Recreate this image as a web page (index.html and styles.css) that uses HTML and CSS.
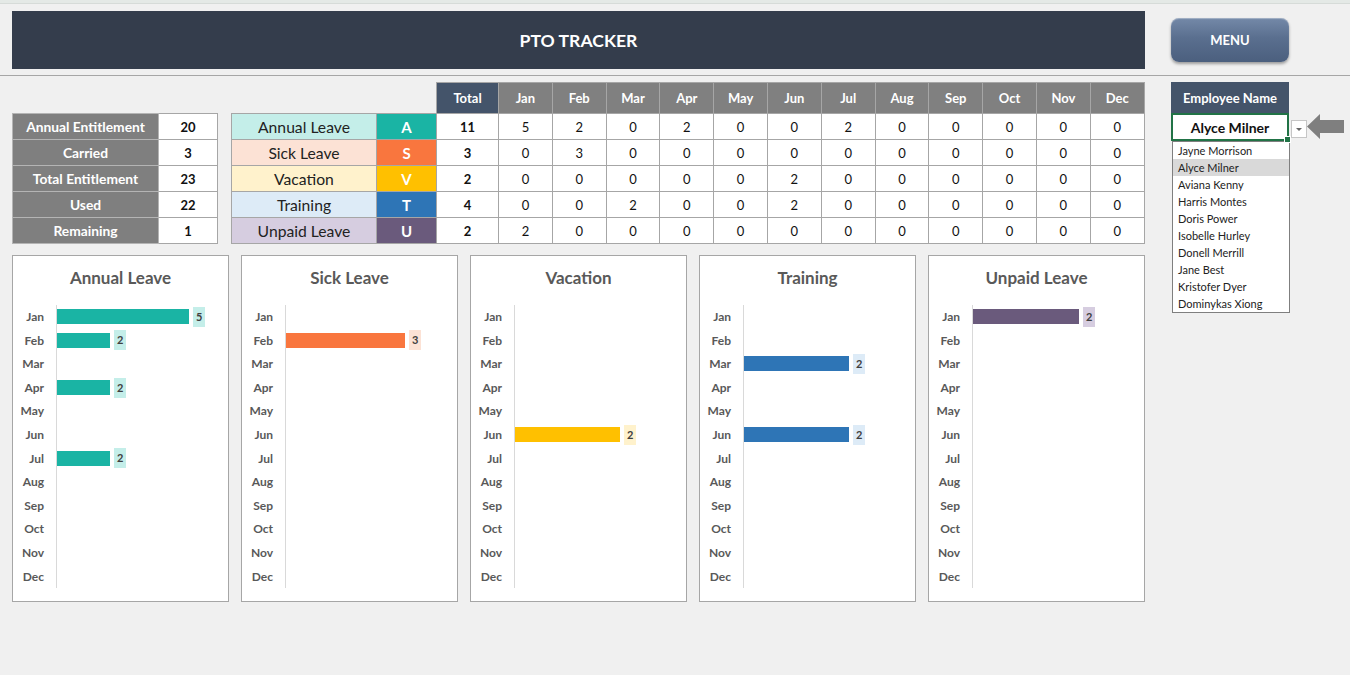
FILE: index.html
```html
<!DOCTYPE html>
<html lang="en">
<head>
  <meta charset="UTF-8">
  <meta name="viewport" content="width=device-width, initial-scale=1.0">
  <title>PTO Tracker</title>
  <link rel="stylesheet" href="styles.css">
</head>
<body>
  <div class="ribbon"></div>

  <div class="topbar">
    <div class="title-bar">PTO TRACKER</div>
    <div class="menu-btn">MENU</div>
  </div>
  <div class="divider"></div>

  <div class="content">
    <div class="left">
      <div class="tables">
        <table class="summary">
          <tr><th>Annual Entitlement</th><td>20</td></tr>
          <tr><th>Carried</th><td>3</td></tr>
          <tr><th>Total Entitlement</th><td>23</td></tr>
          <tr><th>Used</th><td>22</td></tr>
          <tr><th>Remaining</th><td>1</td></tr>
        </table>

        <table class="leave">
          <colgroup>
            <col class="c-type"><col class="c-code"><col class="c-total">
            <col span="12" class="c-month">
          </colgroup>
          <tr class="head">
            <th class="blank"></th><th class="blank"></th>
            <th class="total-h">Total</th>
            <th>Jan</th><th>Feb</th><th>Mar</th><th>Apr</th><th>May</th><th>Jun</th>
            <th>Jul</th><th>Aug</th><th>Sep</th><th>Oct</th><th>Nov</th><th>Dec</th>
          </tr>
          <tr>
            <td class="type annual-l">Annual Leave</td><td class="code annual">A</td><td class="tot">11</td>
            <td>5</td><td>2</td><td>0</td><td>2</td><td>0</td><td>0</td><td>2</td><td>0</td><td>0</td><td>0</td><td>0</td><td>0</td>
          </tr>
          <tr>
            <td class="type sick-l">Sick Leave</td><td class="code sick">S</td><td class="tot">3</td>
            <td>0</td><td>3</td><td>0</td><td>0</td><td>0</td><td>0</td><td>0</td><td>0</td><td>0</td><td>0</td><td>0</td><td>0</td>
          </tr>
          <tr>
            <td class="type vac-l">Vacation</td><td class="code vac">V</td><td class="tot">2</td>
            <td>0</td><td>0</td><td>0</td><td>0</td><td>0</td><td>2</td><td>0</td><td>0</td><td>0</td><td>0</td><td>0</td><td>0</td>
          </tr>
          <tr>
            <td class="type train-l">Training</td><td class="code train">T</td><td class="tot">4</td>
            <td>0</td><td>0</td><td>2</td><td>0</td><td>0</td><td>2</td><td>0</td><td>0</td><td>0</td><td>0</td><td>0</td><td>0</td>
          </tr>
          <tr>
            <td class="type unpaid-l">Unpaid Leave</td><td class="code unpaid">U</td><td class="tot">2</td>
            <td>2</td><td>0</td><td>0</td><td>0</td><td>0</td><td>0</td><td>0</td><td>0</td><td>0</td><td>0</td><td>0</td><td>0</td>
          </tr>
        </table>
      </div>

      <div class="charts">
        <div class="chart">
          <div class="chart-title">Annual Leave</div>
          <div class="plot">
            <div class="row"><span class="m">Jan</span><div class="track"><div class="bar annual" style="width:132px"></div><span class="val annual-l">5</span></div></div>
            <div class="row"><span class="m">Feb</span><div class="track"><div class="bar annual" style="width:53px"></div><span class="val annual-l">2</span></div></div>
            <div class="row"><span class="m">Mar</span><div class="track"></div></div>
            <div class="row"><span class="m">Apr</span><div class="track"><div class="bar annual" style="width:53px"></div><span class="val annual-l">2</span></div></div>
            <div class="row"><span class="m">May</span><div class="track"></div></div>
            <div class="row"><span class="m">Jun</span><div class="track"></div></div>
            <div class="row"><span class="m">Jul</span><div class="track"><div class="bar annual" style="width:53px"></div><span class="val annual-l">2</span></div></div>
            <div class="row"><span class="m">Aug</span><div class="track"></div></div>
            <div class="row"><span class="m">Sep</span><div class="track"></div></div>
            <div class="row"><span class="m">Oct</span><div class="track"></div></div>
            <div class="row"><span class="m">Nov</span><div class="track"></div></div>
            <div class="row"><span class="m">Dec</span><div class="track"></div></div>
          </div>
        </div>

        <div class="chart">
          <div class="chart-title">Sick Leave</div>
          <div class="plot">
            <div class="row"><span class="m">Jan</span><div class="track"></div></div>
            <div class="row"><span class="m">Feb</span><div class="track"><div class="bar sick" style="width:119px"></div><span class="val sick-l">3</span></div></div>
            <div class="row"><span class="m">Mar</span><div class="track"></div></div>
            <div class="row"><span class="m">Apr</span><div class="track"></div></div>
            <div class="row"><span class="m">May</span><div class="track"></div></div>
            <div class="row"><span class="m">Jun</span><div class="track"></div></div>
            <div class="row"><span class="m">Jul</span><div class="track"></div></div>
            <div class="row"><span class="m">Aug</span><div class="track"></div></div>
            <div class="row"><span class="m">Sep</span><div class="track"></div></div>
            <div class="row"><span class="m">Oct</span><div class="track"></div></div>
            <div class="row"><span class="m">Nov</span><div class="track"></div></div>
            <div class="row"><span class="m">Dec</span><div class="track"></div></div>
          </div>
        </div>

        <div class="chart">
          <div class="chart-title">Vacation</div>
          <div class="plot">
            <div class="row"><span class="m">Jan</span><div class="track"></div></div>
            <div class="row"><span class="m">Feb</span><div class="track"></div></div>
            <div class="row"><span class="m">Mar</span><div class="track"></div></div>
            <div class="row"><span class="m">Apr</span><div class="track"></div></div>
            <div class="row"><span class="m">May</span><div class="track"></div></div>
            <div class="row"><span class="m">Jun</span><div class="track"><div class="bar vac" style="width:105px"></div><span class="val vac-l">2</span></div></div>
            <div class="row"><span class="m">Jul</span><div class="track"></div></div>
            <div class="row"><span class="m">Aug</span><div class="track"></div></div>
            <div class="row"><span class="m">Sep</span><div class="track"></div></div>
            <div class="row"><span class="m">Oct</span><div class="track"></div></div>
            <div class="row"><span class="m">Nov</span><div class="track"></div></div>
            <div class="row"><span class="m">Dec</span><div class="track"></div></div>
          </div>
        </div>

        <div class="chart">
          <div class="chart-title">Training</div>
          <div class="plot">
            <div class="row"><span class="m">Jan</span><div class="track"></div></div>
            <div class="row"><span class="m">Feb</span><div class="track"></div></div>
            <div class="row"><span class="m">Mar</span><div class="track"><div class="bar train" style="width:105px"></div><span class="val train-l">2</span></div></div>
            <div class="row"><span class="m">Apr</span><div class="track"></div></div>
            <div class="row"><span class="m">May</span><div class="track"></div></div>
            <div class="row"><span class="m">Jun</span><div class="track"><div class="bar train" style="width:105px"></div><span class="val train-l">2</span></div></div>
            <div class="row"><span class="m">Jul</span><div class="track"></div></div>
            <div class="row"><span class="m">Aug</span><div class="track"></div></div>
            <div class="row"><span class="m">Sep</span><div class="track"></div></div>
            <div class="row"><span class="m">Oct</span><div class="track"></div></div>
            <div class="row"><span class="m">Nov</span><div class="track"></div></div>
            <div class="row"><span class="m">Dec</span><div class="track"></div></div>
          </div>
        </div>

        <div class="chart">
          <div class="chart-title">Unpaid Leave</div>
          <div class="plot">
            <div class="row"><span class="m">Jan</span><div class="track"><div class="bar unpaid" style="width:106px"></div><span class="val unpaid-l">2</span></div></div>
            <div class="row"><span class="m">Feb</span><div class="track"></div></div>
            <div class="row"><span class="m">Mar</span><div class="track"></div></div>
            <div class="row"><span class="m">Apr</span><div class="track"></div></div>
            <div class="row"><span class="m">May</span><div class="track"></div></div>
            <div class="row"><span class="m">Jun</span><div class="track"></div></div>
            <div class="row"><span class="m">Jul</span><div class="track"></div></div>
            <div class="row"><span class="m">Aug</span><div class="track"></div></div>
            <div class="row"><span class="m">Sep</span><div class="track"></div></div>
            <div class="row"><span class="m">Oct</span><div class="track"></div></div>
            <div class="row"><span class="m">Nov</span><div class="track"></div></div>
            <div class="row"><span class="m">Dec</span><div class="track"></div></div>
          </div>
        </div>
      </div>
    </div>

    <div class="emp">
      <div class="emp-head">Employee Name</div>
      <div class="emp-row">
        <div class="emp-cell">Alyce Milner<span class="handle"></span></div>
        <div class="dd-btn">
          <svg width="8" height="5" viewBox="0 0 8 5"><path d="M1 1 L7 1 L4 4 Z" fill="#666"/></svg>
        </div>
        <svg class="pointer" width="37" height="26" viewBox="0 0 37 26">
          <path d="M0 12.5 L13 0 L13 6 L37 6 L37 19 L13 19 L13 25 Z" fill="#7f7f7f"/>
        </svg>
      </div>
      <ul class="dd-list">
        <li>Jayne Morrison</li>
        <li class="sel">Alyce Milner</li>
        <li>Aviana Kenny</li>
        <li>Harris Montes</li>
        <li>Doris Power</li>
        <li>Isobelle Hurley</li>
        <li>Donell Merrill</li>
        <li>Jane Best</li>
        <li>Kristofer Dyer</li>
        <li>Dominykas Xiong</li>
      </ul>
    </div>
  </div>
</body>
</html>
```

FILE: styles.css
```css
/* General Styles */
body {
  margin: 0;
  background: #f0f0f0;
  font-family: Lato, "Open Sans", sans-serif;
  color: #222;
}

.ribbon {
  height: 3px;
  background: #e4e9e6;
  border-bottom: 1px solid #d6dbd8;
}

/* Top bar */
.topbar {
  display: flex;
  align-items: flex-start;
  padding: 7px 0 0 12px;
}

.title-bar {
  width: 1133px;
  height: 58px;
  background: #343d4c;
  color: #fff;
  font-weight: bold;
  font-size: 17.6px;
  display: flex;
  align-items: center;
  justify-content: center;
}

.menu-btn {
  width: 118px;
  height: 44px;
  margin: 7px 0 0 26px;
  border-radius: 8px;
  background: linear-gradient(#7489a8, #5a6f8f 45%, #4b5f7e);
  box-shadow: 0 2px 3px rgba(0, 0, 0, 0.35), inset 0 1px 1px rgba(255, 255, 255, 0.35);
  color: #fff;
  font-weight: bold;
  font-size: 13px;
  display: flex;
  align-items: center;
  justify-content: center;
}

.divider {
  margin-top: 6px;
  border-top: 1px solid #a6a6a6;
}

/* Main area */
.content {
  display: flex;
  align-items: flex-start;
  padding: 6px 0 0 12px;
}

.left {
  width: 1133px;
  flex: none;
}

.tables {
  display: flex;
  align-items: flex-start;
  gap: 13px;
}

table {
  flex: none;
  border-collapse: collapse;
  table-layout: fixed;
}

th, td {
  padding: 0;
  height: 25px;
  text-align: center;
  font-size: 13px;
  border: 1px solid #a6a6a6;
}

.summary {
  margin-top: 31px;
  width: 206px;
}

.summary th {
  width: 145px;
  background: #7f7f7f;
  color: #fff;
  font-size: 13.8px;
  border-color: #b4b4b4;
}

.summary td {
  background: #fff;
  font-weight: bold;
  color: #111;
}

.leave {
  width: 912px;
}

.c-type { width: 145px; }
.c-code { width: 60px; }
.c-total { width: 62px; }
.c-month { width: 53.8px; }

.leave .head th {
  height: 30px;
  background: #808080;
  color: #fff;
  border-color: #a6a6a6;
}

.leave .head th.total-h {
  background: #44546a;
}

.leave .head th.blank {
  background: none;
  border: none;
}

.leave td {
  background: #fff;
  color: #111;
}

.leave td.tot {
  font-weight: bold;
}

.leave td.type {
  font-size: 15.7px;
  color: #222;
}

.leave td.code {
  color: #fff;
  font-weight: bold;
  font-size: 15px;
}

/* Leave colours */
.annual { background: #1ab4a4 !important; }
.sick { background: #f9763e !important; }
.vac { background: #ffc000 !important; }
.train { background: #2e75b6 !important; }
.unpaid { background: #6a5a7c !important; }

.annual-l { background: #c4eee9 !important; }
.sick-l { background: #fce2d5 !important; }
.vac-l { background: #fff2cc !important; }
.train-l { background: #ddebf7 !important; }
.unpaid-l { background: #d6cde0 !important; }

/* Charts */
.charts {
  display: flex;
  gap: 12px;
  margin-top: 11px;
}

.chart {
  width: 215px;
  height: 345px;
  background: #fff;
  border: 1px solid #a6a6a6;
}

.chart-title {
  margin-top: 11px;
  line-height: 22px;
  text-align: center;
  font-size: 17px;
  font-weight: bold;
  color: #595959;
}

.plot {
  margin-top: 16px;
}

.row {
  display: flex;
  align-items: stretch;
  height: 23.6px;
}

.m {
  width: 31px;
  margin-right: 12px;
  text-align: right;
  font-size: 12px;
  font-weight: bold;
  color: #595959;
  line-height: 23.6px;
}

.track {
  flex: 1;
  display: flex;
  align-items: center;
  border-left: 1px solid #d9d9d9;
}

.bar {
  height: 15px;
}

.val {
  margin-left: 4px;
  height: 20px;
  line-height: 20px;
  padding: 0 3px;
  font-size: 11px;
  font-weight: bold;
  color: #404040;
}

/* Employee picker */
.emp {
  margin-left: 26px;
  width: 118px;
}

.emp-head {
  height: 31px;
  background: #44546a;
  color: #fff;
  font-weight: bold;
  font-size: 13px;
  display: flex;
  align-items: center;
  justify-content: center;
}

.emp-row {
  display: flex;
  align-items: flex-start;
  width: 180px;
}

.emp-cell {
  position: relative;
  box-sizing: border-box;
  width: 118px;
  flex: none;
  height: 28px;
  background: #fff;
  border: 2px solid #217346;
  font-weight: bold;
  font-size: 14px;
  color: #111;
  display: flex;
  align-items: center;
  justify-content: center;
}

.handle {
  position: absolute;
  right: -4px;
  bottom: -4px;
  width: 5px;
  height: 5px;
  background: #217346;
  border: 1px solid #fff;
}

.dd-btn {
  box-sizing: border-box;
  width: 16px;
  height: 18px;
  margin: 7px 0 0 2px;
  flex: none;
  background: #fff;
  border: 1px solid #c6c6c6;
  display: flex;
  align-items: center;
  justify-content: center;
}

.pointer {
  flex: none;
  margin-top: 1px;
}

.dd-list {
  list-style: none;
  margin: 0 0 0 1px;
  padding: 0;
  box-sizing: border-box;
  width: 118px;
  background: #fff;
  border: 1px solid #7f7f7f;
}

.dd-list li {
  height: 17px;
  line-height: 17px;
  padding-left: 5px;
  font-size: 11px;
  color: #222;
}

.dd-list li.sel {
  background: #d9d9d9;
}
```
